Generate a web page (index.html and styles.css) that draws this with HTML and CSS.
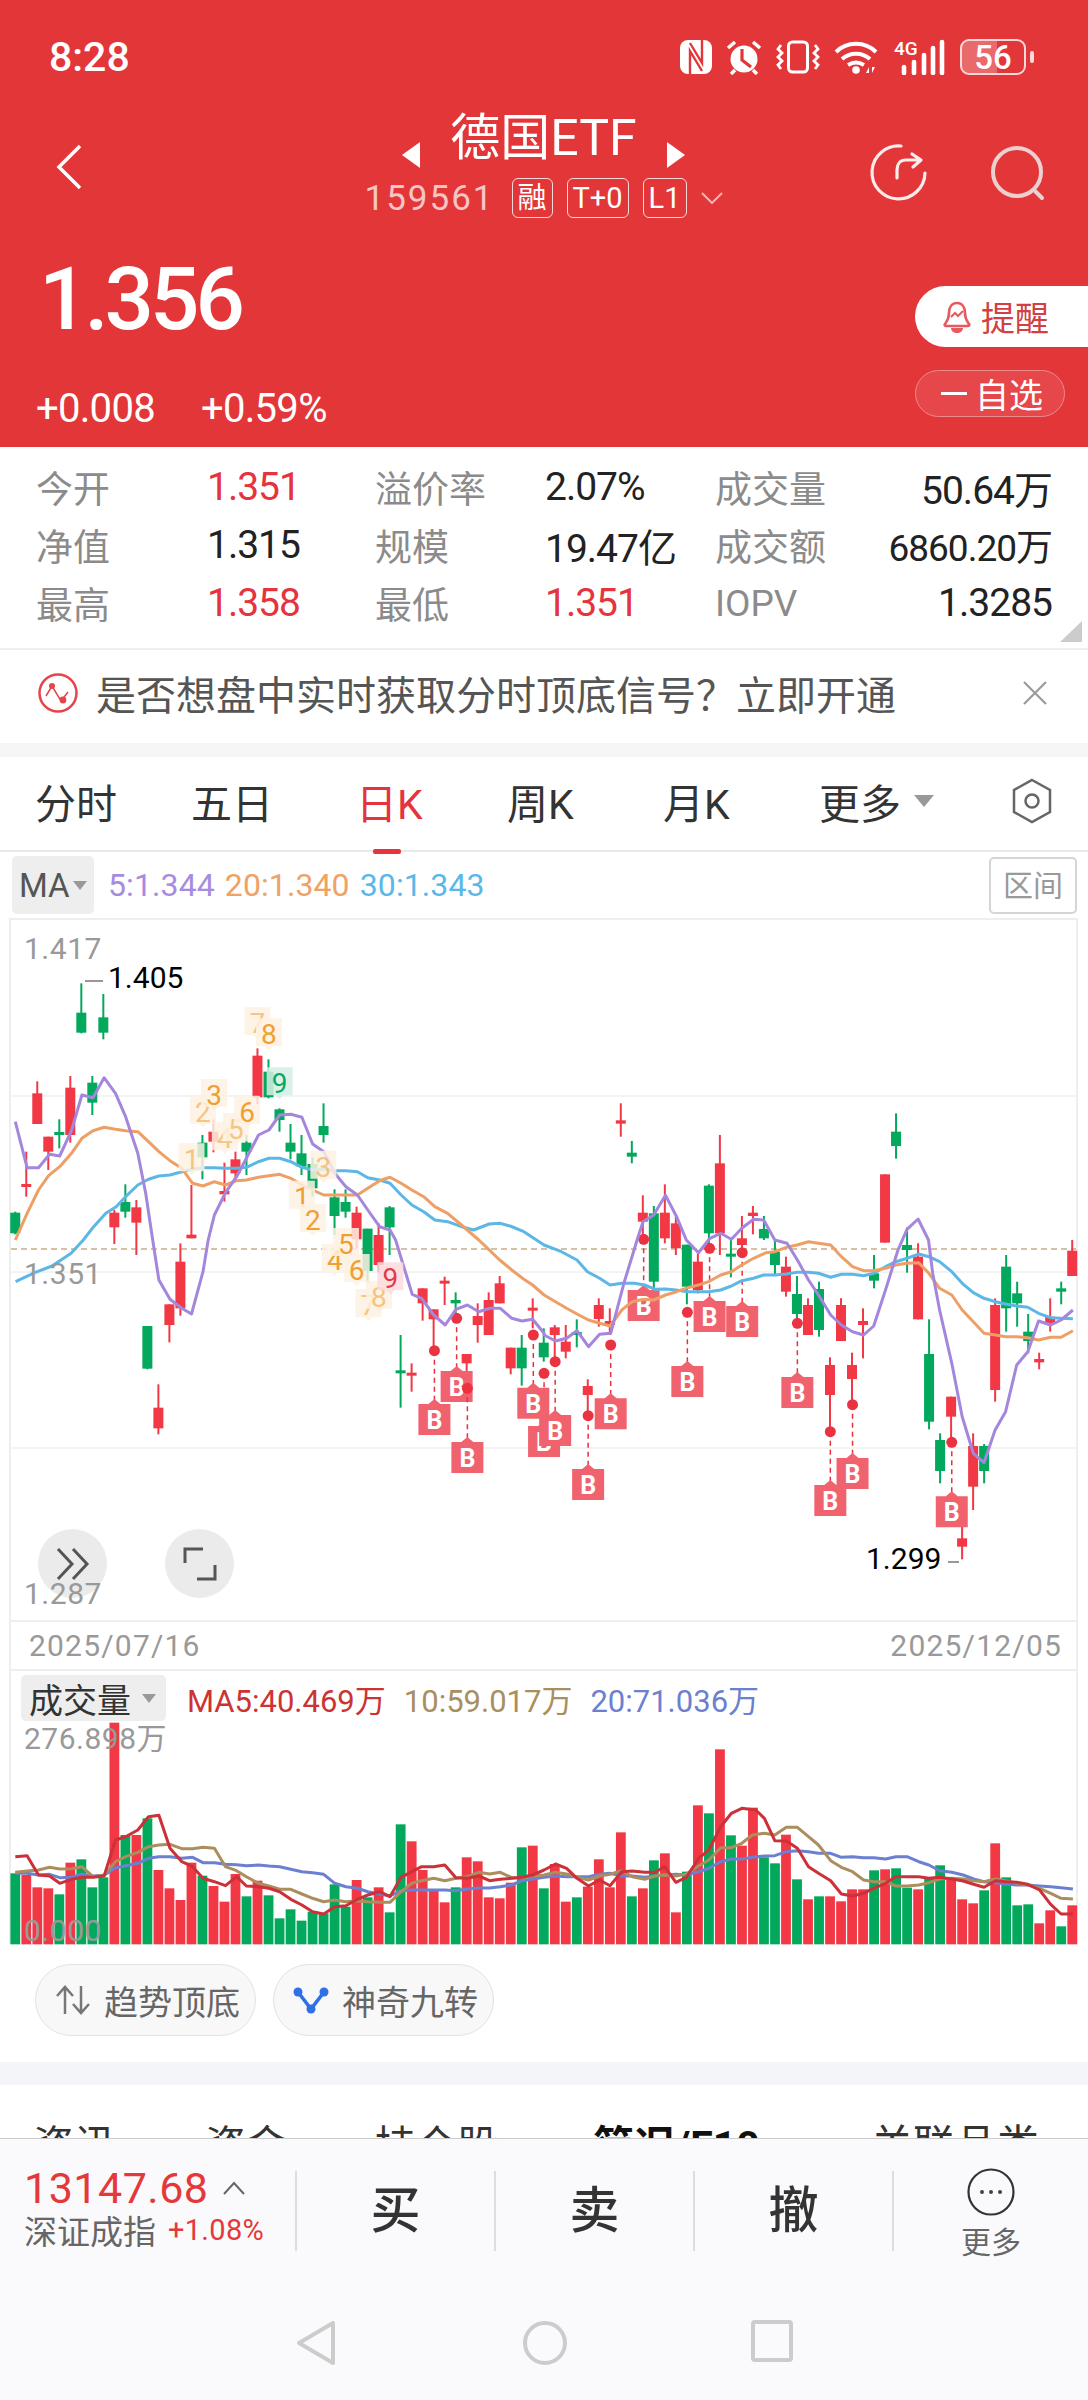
FILE: index.html
```html
<!DOCTYPE html>
<html lang="zh-CN">
  <head>
    <meta charset="UTF-8" />
    <meta name="viewport" content="width=device-width, initial-scale=1.0" />
    <title>德国ETF</title>
    <link rel="stylesheet" href="styles.css">
  </head>
  <body>
    <div id="root">
      <header class="header">
        <div class="status_bar">
          <span class="status_time">8:28</span>
          <div class="status_icons">
            <svg width="32" height="34" viewBox="0 0 32 34"><rect x="0" y="0" width="32" height="34" rx="8" fill="#fff"/><path d="M10 34V11l12 20M22 0v23L10 3" fill="none" stroke="#e33639" stroke-width="2.4"/></svg>
            <svg width="36" height="36" viewBox="0 0 36 36"><circle cx="18" cy="20" r="13.5" fill="#fff"/><path d="M16 10v11l9 7" fill="none" stroke="#e33639" stroke-width="3.2"/><path d="M2 9l7-6M34 9l-7-6M9 31l-4 4M27 31l4 4" stroke="#fff" stroke-width="3.5"/></svg>
            <svg width="44" height="34" viewBox="0 0 44 34"><rect x="12.5" y="2" width="19" height="30" rx="4" fill="none" stroke="#fff" stroke-width="3"/><path d="M5 5L2 9l4 4-4 4 4 4-4 4 3 4M39 5l3 4-4 4 4 4-4 4 4 4-3 4" fill="none" stroke="#fff" stroke-width="2.8"/></svg>
            <svg width="46" height="34" viewBox="0 0 46 34"><path d="M2 12c11-11 29-11 40 0M8 19c8-7 20-7 28 0M14 25c5-3 11-3 16 0" fill="none" stroke="#fff" stroke-width="4"/><circle cx="22" cy="30" r="3.8" fill="#fff"/><path d="M32 33l3-6v6zM38 27v6l3-6z" fill="#fff"/></svg>
            <svg class="status_signal" width="52" height="40" viewBox="0 -4 52 40"><text x="0" y="16" class="status_4g">4G</text><path d="M10 28v6M20 23v11M30 16v18M39 9v25M48 3v31" stroke="#fff" stroke-width="4.6" stroke-linecap="round"/></svg>
            <div class="battery"><span>56</span></div>
            <i class="battery_tip"></i>
          </div>
        </div>

        <div class="nav">
          <svg class="nav_back" width="26" height="46" viewBox="0 0 26 46"><path d="M24 2L3 23l21 21" fill="none" stroke="#fff" stroke-width="3.5"/></svg>
          <div class="nav_title">
            <div class="title_row">
              <i class="arrow_left"></i>
              <span class="title_text">德国ETF</span>
              <i class="arrow_right"></i>
            </div>
            <div class="sub_row">
              <span class="sub_code">159561</span>
              <span class="sub_tag">融</span>
              <span class="sub_tag">T+0</span>
              <span class="sub_tag">L1</span>
              <svg width="22" height="12" viewBox="0 0 22 12"><path d="M1 1l10 10L21 1" fill="none" stroke="#f3b6b6" stroke-width="2"/></svg>
            </div>
          </div>
          <div class="nav_icons">
            <svg width="60" height="60" viewBox="0 0 60 60"><path d="M32 4A26.5 26.5 0 1 0 56 31" fill="none" stroke="#fbecec" stroke-width="3.2" stroke-linecap="round"/><path d="M28 36V28c0-6 3-10 9-10h14M43 12l9 6-8 7" fill="none" stroke="#fbecec" stroke-width="3.2" stroke-linecap="round" stroke-linejoin="round"/></svg>
            <svg width="60" height="60" viewBox="0 0 60 60"><circle cx="30" cy="30" r="24" fill="none" stroke="#eccfcf" stroke-width="4"/><path d="M47 48l8 8" stroke="#eccfcf" stroke-width="4" stroke-linecap="round"/></svg>
          </div>
        </div>

        <div class="quote">
          <div class="quote_main">
            <div class="quote_price">1.356</div>
            <div class="quote_change"><span>+0.008</span><span>+0.59%</span></div>
          </div>
          <div class="quote_actions">
            <div class="btn_remind">
              <svg width="32" height="34" viewBox="0 0 32 34"><path d="M4 24c2-3 4-5 4-11C8 7 11 3 16 3s8 4 8 10c0 6 2 8 4 11 1 1 0 2-1 2H5c-1 0-2-1-1-2z" fill="none" stroke="#e65a5f" stroke-width="2.6" stroke-linejoin="round"/><path d="M10 28c0 3 3 5 6 5s6-2 6-5z" fill="#e65a5f"/><path d="M10 17l4-4 3 3 5-5" fill="none" stroke="#e65a5f" stroke-width="2"/></svg>
              <span>提醒</span>
            </div>
            <div class="btn_watch"><i></i><span>自选</span></div>
          </div>
        </div>
      </header>

      <section class="stats">
        <span class="stat_label">今开</span><span class="stat_val up">1.351</span>
        <span class="stat_label">溢价率</span><span class="stat_val">2.07%</span>
        <span class="stat_label col3">成交量</span><span class="stat_val right">50.64万</span>
        <span class="stat_label">净值</span><span class="stat_val">1.315</span>
        <span class="stat_label">规模</span><span class="stat_val">19.47亿</span>
        <span class="stat_label col3">成交额</span><span class="stat_val right small">6860.20万</span>
        <span class="stat_label">最高</span><span class="stat_val up">1.358</span>
        <span class="stat_label">最低</span><span class="stat_val up">1.351</span>
        <span class="stat_label col3">IOPV</span><span class="stat_val right">1.3285</span>
        <i class="stats_corner"></i>
      </section>

      <section class="notice">
        <svg width="42" height="42" viewBox="0 0 42 42"><circle cx="21" cy="21" r="18.5" fill="none" stroke="#e5444c" stroke-width="2.5"/><path d="M9 24l6-10 9 15 7-9" fill="none" stroke="#e5444c" stroke-width="1.5"/><circle cx="15" cy="14" r="3" fill="#e5444c"/><circle cx="26" cy="28" r="3.4" fill="#e5444c"/></svg>
        <span class="notice_text">是否想盘中实时获取分时顶底信号？立即开通</span>
        <svg class="notice_close" width="26" height="26" viewBox="0 0 26 26"><path d="M2 2l22 22M24 2L2 24" stroke="#9a9a9a" stroke-width="2.2"/></svg>
      </section>

      <nav class="tabs">
        <span class="tab tab_a">分时</span>
        <span class="tab tab_b">五日</span>
        <span class="tab tab_c active">日K</span>
        <span class="tab tab_d">周K</span>
        <span class="tab tab_e">月K</span>
        <span class="tab tab_f">更多<i class="tri"></i></span>
        <svg class="tab_icon" width="40" height="46" viewBox="0 0 40 46"><path d="M20 2l18 10v22L20 44 2 34V12z" fill="none" stroke="#666" stroke-width="2.5"/><circle cx="20" cy="23" r="6.5" fill="none" stroke="#666" stroke-width="2.5"/></svg>
      </nav>

      <div class="ma_row">
        <div class="ma_chip">MA<i class="tri small"></i></div>
        <span class="ma_val ma5">5:1.344</span>
        <span class="ma_val ma20">20:1.340</span>
        <span class="ma_val ma30">30:1.343</span>
        <span class="ma_range">区间</span>
      </div>

      <section class="chart">
        <svg id="kline" width="1088" height="704"></svg>
        <div class="round_btn round_a">
          <svg width="36" height="34" viewBox="0 0 36 34"><path d="M3 2l14 15L3 32M18 2l14 15-14 15" fill="none" stroke="#555" stroke-width="3"/></svg>
        </div>
        <div class="round_btn round_b">
          <svg width="34" height="34" viewBox="0 0 34 34"><path d="M2 16V2h18M32 18v14H14" fill="none" stroke="#555" stroke-width="3"/></svg>
        </div>
        <span class="axis axis_top">1.417</span>
        <span class="axis axis_mid">1.351</span>
        <span class="axis axis_low">1.287</span>
        <span class="extreme extreme_high">1.405</span>
        <span class="extreme extreme_low">1.299</span>
      </section>

      <div class="date_row"><span>2025/07/16</span><span>2025/12/05</span></div>

      <section class="volume">
        <svg id="volume" width="1088" height="280"></svg>
        <div class="vol_head">
          <div class="vol_chip">成交量<i class="tri small"></i></div>
          <span class="vol_ma vol5">MA5:40.469万</span>
          <span class="vol_ma vol10">10:59.017万</span>
          <span class="vol_ma vol20">20:71.036万</span>
        </div>
        <span class="axis vol_max">276.898万</span>
        <span class="axis vol_min">0.000</span>
      </section>

      <div class="signals">
        <div class="signal">
          <svg width="36" height="30" viewBox="0 0 36 30"><path d="M10 29V3M2 11l8-9 8 9" fill="none" stroke="#777" stroke-width="2.5"/><path d="M26 1v26M18 19l8 9 8-9" fill="none" stroke="#777" stroke-width="2.5"/></svg>
          <span>趋势顶底</span>
        </div>
        <div class="signal">
          <svg width="36" height="28" viewBox="0 0 36 28"><path d="M5 6l13 17L31 6" fill="none" stroke="#2f6fe8" stroke-width="3.5"/><circle cx="5" cy="6" r="4.5" fill="#2f6fe8"/><circle cx="31" cy="6" r="4.5" fill="#2f6fe8"/><circle cx="18" cy="23" r="4.5" fill="#2f6fe8"/></svg>
          <span>神奇九转</span>
        </div>
      </div>

      <div class="band"></div>

      <div class="sub_tabs">
        <span class="sub_a">资讯</span>
        <span class="sub_b">资金</span>
        <span class="sub_c">持仓股</span>
        <span class="sub_d">简况/F10</span>
        <span class="sub_e">关联品类</span>
      </div>

      <footer class="bottom">
        <div class="trade">
          <div class="index_box">
            <div class="index_top"><span class="index_num">13147.68</span><svg width="22" height="14" viewBox="0 0 22 14"><path d="M1 13L11 2l10 11" fill="none" stroke="#666" stroke-width="2"/></svg></div>
            <div class="index_sub"><span class="index_name">深证成指</span><span class="index_pct">+1.08%</span></div>
          </div>
          <div class="trade_btn">买</div>
          <div class="trade_btn">卖</div>
          <div class="trade_btn">撤</div>
          <div class="trade_more">
            <svg width="48" height="48" viewBox="0 0 48 48"><circle cx="24" cy="24" r="22.5" fill="none" stroke="#333" stroke-width="2.2"/><circle cx="15" cy="24" r="2" fill="#444"/><circle cx="24" cy="24" r="2" fill="#444"/><circle cx="33" cy="24" r="2" fill="#444"/></svg>
            <span>更多</span>
          </div>
        </div>
        <div class="sys_nav">
          <svg width="42" height="46" viewBox="0 0 42 46"><path d="M37 3v40L3 23z" fill="none" stroke="#ccc" stroke-width="4" stroke-linejoin="round"/></svg>
          <svg width="46" height="46" viewBox="0 0 46 46"><circle cx="23" cy="23" r="20" fill="none" stroke="#ccc" stroke-width="4"/></svg>
          <svg width="42" height="42" viewBox="0 0 42 42"><rect x="2" y="2" width="38" height="38" rx="2" fill="none" stroke="#ccc" stroke-width="4"/></svg>
        </div>
      </footer>
    </div>
    <script src="chart.js"></script>
  </body>
</html>
```

FILE: styles.css
```css
* {
  box-sizing: border-box;
}
html,
body {
  margin: 0;
  padding: 0;
}
body {
  background: #fff;
  font-family: Roboto, "Noto Sans CJK SC", sans-serif;
  color: #222;
}
i {
  display: block;
}
svg {
  display: block;
  flex: none;
}
#root {
  width: 1088px;
  height: 2400px;
  overflow: hidden;
  display: flex;
  flex-direction: column;
}

/* header */
.header {
  height: 447px;
  background: #e33639;
  color: #fff;
}
.status_bar {
  height: 114px;
  padding: 0 54px 0 49px;
  display: flex;
  justify-content: space-between;
  align-items: center;
}
.status_time {
  font-size: 41px;
  font-weight: 500;
}
.status_icons {
  display: flex;
  align-items: center;
  gap: 14px;
}
.status_signal {
  margin-top: -4px;
}
.status_4g {
  font: 500 19px Roboto, sans-serif;
  fill: #fff;
}
.battery {
  width: 66px;
  height: 36px;
  border: 2.5px solid #f8dada;
  border-radius: 9px;
  background: linear-gradient(90deg, #ea6a6c 56%, #e33639 56%);
  display: flex;
  align-items: center;
  justify-content: center;
  font-size: 33px;
  font-weight: 500;
}
.battery_tip {
  width: 4px;
  height: 12px;
  margin-left: -10px;
  background: #f8dada;
  border-radius: 2px;
}
.nav {
  height: 111px;
  padding: 0 41px 0 56px;
  display: flex;
  justify-content: space-between;
  align-items: center;
}
.nav_back {
  margin-top: -6px;
}
.nav_title {
  width: 400px;
  margin: -9px 0 0 136px;
  display: flex;
  flex-direction: column;
  align-items: center;
}
.title_row {
  height: 52px;
  display: flex;
  align-items: center;
  gap: 30px;
}
.title_text {
  font-size: 50px;
  line-height: 52px;
}
.arrow_left,
.arrow_right {
  width: 0;
  height: 0;
  margin-top: 34px;
  border-top: 13px solid transparent;
  border-bottom: 13px solid transparent;
}
.arrow_left {
  border-right: 18px solid #fff;
}
.arrow_right {
  border-left: 18px solid #fff;
}
.sub_row {
  margin-top: 14px;
  display: flex;
  align-items: center;
  gap: 14px;
}
.sub_code {
  font-size: 35px;
  letter-spacing: 2px;
  color: #f6c5c5;
  margin-right: 3px;
}
.sub_tag {
  height: 40px;
  padding: 0 5px;
  border: 1px solid #f8dada;
  border-radius: 6px;
  font-size: 29px;
  line-height: 38px;
}
.nav_icons {
  margin-top: 4px;
  display: flex;
  gap: 58px;
}
.quote {
  height: 222px;
  display: flex;
  justify-content: space-between;
}
.quote_main {
  padding: 24px 0 0 36px;
}
.quote_price {
  font-size: 87px;
  line-height: 100px;
  font-weight: 500;
  margin-left: 3px;
  letter-spacing: -4px;
}
.quote_change {
  margin-top: 37px;
  display: flex;
  gap: 46px;
  font-size: 40px;
  line-height: 46px;
  letter-spacing: -.7px;
}
.quote_actions {
  padding-top: 61px;
  width: 173px;
}
.btn_remind {
  height: 61px;
  background: #fff;
  border-radius: 31px 0 0 31px;
  padding-left: 26px;
  display: flex;
  align-items: center;
  gap: 8px;
  font-size: 34px;
  color: #d23f45;
}
.btn_watch {
  width: 150px;
  height: 47px;
  margin-top: 23px;
  border: 1px solid #ee8a8c;
  border-radius: 24px;
  background: #e5474b;
  padding-left: 25px;
  display: flex;
  align-items: center;
  gap: 8px;
  font-size: 34px;
}
.btn_watch i {
  width: 26px;
  height: 3px;
  background: #fff;
}

/* stats */
.stats {
  position: relative;
  height: 203px;
  padding: 11px 36px 0;
  border-bottom: 2px solid #eee;
  display: grid;
  grid-template-columns: 171px 168px 170px 170px 70px 1fr;
  grid-auto-rows: 58px;
  align-items: center;
  font-size: 37px;
}
.stat_label {
  color: #8b8b8b;
}
.stat_label.col3 {
  grid-column: 5;
  white-space: nowrap;
}
.stat_val {
  color: #222;
  font-size: 39px;
  letter-spacing: -1px;
}
.stat_val.up {
  color: #e5343e;
}
.stat_val.right {
  grid-column: 6;
  justify-self: end;
  white-space: nowrap;
}
.stat_val.small {
  font-size: 37px;
}
.stats_corner {
  position: absolute;
  right: 6px;
  bottom: 6px;
  width: 0;
  height: 0;
  border-left: 22px solid transparent;
  border-bottom: 21px solid #ccc;
}

/* notice */
.notice {
  height: 93px;
  padding: 0 40px 6px 37px;
  display: flex;
  align-items: center;
}
.notice_text {
  margin-left: 17px;
  font-size: 40px;
  color: #555;
  white-space: nowrap;
}
.notice_close {
  margin-left: auto;
}

/* tabs */
.tabs {
  height: 110px;
  border-top: 14px solid #f6f6f6;
  border-bottom: 2px solid #eaeaea;
  padding: 0 0 4px 35px;
  display: flex;
  align-items: center;
  font-size: 41px;
  color: #333;
  position: relative;
}
.tab_a { width: 156px; }
.tab_b { width: 165px; }
.tab_c { width: 151px; }
.tab_d { width: 156px; }
.tab_e { width: 156px; }
.tab_f {
  display: flex;
  align-items: center;
  gap: 13px;
}
.tab.active {
  color: #e5343e;
  position: relative;
}
.tab.active::after {
  content: "";
  position: absolute;
  left: 17px;
  bottom: -23px;
  width: 28px;
  height: 5px;
  border-radius: 2px;
  background: #e5343e;
}
.tab_icon {
  margin-left: 78px;
}
.tri {
  width: 0;
  height: 0;
  border-left: 10px solid transparent;
  border-right: 10px solid transparent;
  border-top: 12px solid #999;
}
.tri.small {
  border-left-width: 7px;
  border-right-width: 7px;
  border-top-width: 9px;
}

/* ma row */
.ma_row {
  height: 66px;
  padding: 4px 11px 4px 12px;
  display: flex;
  align-items: center;
  font-size: 32px;
}
.ma_chip {
  width: 82px;
  height: 58px;
  background: #eee;
  border-radius: 5px;
  padding-left: 7px;
  display: flex;
  align-items: center;
  gap: 3px;
  font-size: 33px;
  color: #555;
  margin-right: 14px;
}
.ma_val {
  margin-right: 10px;
  letter-spacing: .1px;
}
.ma5 { color: #a78be0; }
.ma20 { color: #efa264; }
.ma30 { color: #5ab8e8; }
.ma_range {
  margin-left: auto;
  width: 88px;
  height: 57px;
  border: 2px solid #d5d5d5;
  border-radius: 5px;
  text-align: center;
  font-size: 30px;
  line-height: 53px;
  color: #999;
}

/* chart */
.chart {
  position: relative;
  height: 704px;
}
.buy_mark {
  font: 700 25px Roboto, sans-serif;
  fill: #fff;
  text-anchor: middle;
}
.nine_mark {
  font: 400 28px Roboto, sans-serif;
  text-anchor: middle;
}
.axis {
  position: absolute;
  left: 24px;
  font-size: 30px;
  line-height: 36px;
  color: #999;
  letter-spacing: .5px;
}
.axis_top { top: 13px; }
.axis_mid { top: 338px; }
.axis_low { top: 658px; }
.extreme {
  position: absolute;
  font-size: 30px;
  line-height: 36px;
  color: #000;
}
.extreme_high {
  left: 108px;
  top: 42px;
}
.extreme_low {
  left: 866px;
  top: 623px;
}
.round_btn {
  position: absolute;
  top: 611px;
  width: 69px;
  height: 69px;
  border-radius: 50%;
  background: #ebebeb;
  display: flex;
  align-items: center;
  justify-content: center;
}
.round_a { left: 38px; }
.round_b { left: 165px; }
.date_row {
  height: 47px;
  margin: 0 10px 0 9px;
  padding: 6px 14px 0 18px;
  border-left: 2px solid #eee;
  border-right: 2px solid #eee;
  display: flex;
  justify-content: space-between;
  font-size: 30px;
  line-height: 36px;
  letter-spacing: 1.2px;
  color: #999;
}

/* volume */
.volume {
  position: relative;
  height: 280px;
}
.vol_head {
  position: absolute;
  left: 21px;
  top: 6px;
  display: flex;
  align-items: center;
  font-size: 31px;
}
.vol_chip {
  width: 145px;
  height: 46px;
  background: #eee;
  border-radius: 5px;
  padding-left: 8px;
  margin-right: 21px;
  display: flex;
  align-items: center;
  gap: 11px;
  font-size: 34px;
  color: #333;
}
.vol_ma {
  margin-right: 18px;
}
.vol5 { color: #cc3333; }
.vol10 { color: #a98f60; }
.vol20 { color: #6b80d0; }
.vol_max { top: 52px; }
.vol_min { top: 244px; }

/* signals */
.signals {
  height: 113px;
  padding: 15px 0 0 35px;
  display: flex;
  gap: 17px;
}
.signal {
  width: 221px;
  height: 72px;
  background: #f8f8f8;
  border: 1px solid #e2e2e2;
  border-radius: 36px;
  padding-left: 19px;
  display: flex;
  align-items: center;
  gap: 13px;
  font-size: 34px;
  color: #666;
}
.band {
  height: 23px;
  background: #f4f5f8;
}
.sub_tabs {
  height: 53px;
  padding-top: 33px;
  overflow: hidden;
  display: flex;
  font-size: 41px;
  line-height: 56px;
  color: #333;
  white-space: nowrap;
}
.sub_tabs span {
  display: block;
  height: 60px;
}
.sub_a { margin-left: 33px; width: 172px; }
.sub_b { width: 170px; }
.sub_c { width: 218px; }
.sub_d { width: 278px; font-weight: 700; color: #111; }
.sub_e { font-size: 42px; }

/* bottom */
.bottom {
  flex: 1;
  background: #fafafc;
  border-top: 1px solid #ccc;
}
.trade {
  height: 114px;
  padding-top: 32px;
  display: flex;
}
.index_box {
  width: 297px;
  height: 80px;
  padding-left: 24px;
  border-right: 2px solid #ddd;
}
.index_top {
  display: flex;
  align-items: center;
  gap: 14px;
  height: 40px;
  margin-top: -3px;
}
.index_num {
  font-size: 43px;
  letter-spacing: .5px;
  color: #e5383b;
}
.index_sub {
  display: flex;
  align-items: center;
  gap: 12px;
  margin-top: -2px;
}
.index_name {
  font-size: 33px;
  color: #666;
}
.index_pct {
  font-size: 29px;
  letter-spacing: .3px;
  color: #e5383b;
}
.trade_btn {
  width: 199px;
  height: 80px;
  padding-bottom: 10px;
  border-right: 2px solid #ddd;
  display: flex;
  align-items: center;
  justify-content: center;
  font-size: 50px;
  font-weight: 500;
  color: #333;
}
.trade_more {
  flex: 1;
  margin-top: -3px;
  display: flex;
  flex-direction: column;
  align-items: center;
  gap: 9px;
  font-size: 30px;
  line-height: 36px;
  color: #666;
}
.sys_nav {
  height: 147px;
  padding: 67px 0 0 296px;
  display: flex;
  align-items: flex-start;
}
.sys_nav svg:nth-child(2) {
  margin-left: 184px;
  margin-right: 183px;
}
```

FILE: chart.js
```js
// candles and lines are stored in "reading units": x / 2.882 and y / 3 give pixels
const NS = "http://www.w3.org/2000/svg";
const RED = "#f23845";
const GREEN = "#02a85c";
const PITCH = 11.01;

function cx(i) {
  return 15.25 + i * PITCH;
}
function px(v) {
  return v / 2.882;
}
function py(v) {
  return v / 3 + 2;
}

function add(svg, tag, attrs, text) {
  const el = document.createElementNS(NS, tag);
  for (const k in attrs) el.setAttribute(k, attrs[k]);
  if (text) el.textContent = text;
  svg.appendChild(el);
  return el;
}

function line(svg, pts, color, width, mapY) {
  const d = pts.map((p) => px(p[0]).toFixed(1) + "," + mapY(p[1]).toFixed(1)).join(" ");
  add(svg, "polyline", { points: d, fill: "none", stroke: color, "stroke-width": width, "stroke-linejoin": "round" });
}

// [r/g, wick top, body top, body bottom, wick bottom]
const candles = [
  ["g", 875, 878, 940, 943], ["r", 695, 792, 798, 830], ["r", 484, 520, 612, 612], ["r", 650, 650, 695, 750],
  ["g", 598, 636, 644, 685], ["r", 468, 503, 645, 668], ["g", 190, 278, 338, 340], ["g", 468, 488, 548, 585],
  ["g", 222, 292, 338, 358], ["r", 870, 878, 922, 972], ["g", 793, 846, 875, 893], ["r", 840, 862, 908, 1005],
  ["g", 1218, 1218, 1346, 1348], ["r", 1393, 1463, 1525, 1543], ["r", 1153, 1153, 1215, 1267], ["r", 970, 1025, 1165, 1187],
  ["r", 795, 944, 955, 955], ["g", 645, 668, 712, 778], ["r", 598, 635, 665, 697], ["r", 728, 813, 823, 845],
  ["r", 695, 718, 760, 778], ["g", 645, 668, 695, 765], ["r", 385, 407, 532, 553], ["g", 418, 455, 532, 535],
  ["g", 565, 568, 600, 635], ["g", 612, 668, 695, 718], ["g", 645, 700, 740, 765], ["g", 712, 732, 805, 830],
  ["g", 550, 618, 645, 668], ["g", 808, 832, 888, 945], ["g", 808, 846, 875, 893], ["r", 860, 878, 958, 985],
  ["g", 926, 926, 1053, 1088], ["r", 910, 945, 1035, 1057], ["g", 858, 862, 922, 1005], ["g", 1245, 1351, 1359, 1463],
  ["r", 1330, 1358, 1364, 1415], ["r", 1105, 1105, 1150, 1202], ["r", 1168, 1168, 1198, 1280], ["r", 1070, 1082, 1088, 1155],
  ["g", 1117, 1140, 1150, 1185], ["r", 1302, 1302, 1330, 1400], ["r", 1150, 1188, 1215, 1268], ["r", 1117, 1140, 1245, 1245],
  ["r", 1068, 1090, 1150, 1150], ["r", 1283, 1283, 1345, 1363], ["g", 1245, 1283, 1345, 1397], ["r", 1135, 1163, 1171, 1225],
  ["g", 1225, 1268, 1312, 1325], ["r", 1215, 1222, 1245, 1315], ["r", 1215, 1265, 1295, 1315], ["g", 1198, 1236, 1244, 1282],
  ["r", 1378, 1398, 1425, 1480], ["r", 1135, 1155, 1197, 1220], ["r", 1165, 1203, 1215, 1245], ["r", 550, 601, 611, 650],
  ["g", 663, 698, 710, 730], ["r", 826, 878, 905, 965], ["g", 858, 880, 1085, 1120], ["r", 793, 878, 955, 970],
  ["r", 890, 910, 985, 1005], ["g", 974, 974, 1100, 1153], ["r", 1000, 1025, 1110, 1120], ["g", 793, 797, 940, 975],
  ["r", 645, 730, 940, 1005], ["g", 960, 1001, 1009, 1072], ["r", 888, 955, 975, 1000], ["r", 858, 878, 888, 943],
  ["g", 888, 927, 955, 960], ["g", 960, 995, 1035, 1065], ["r", 1010, 1040, 1115, 1130], ["g", 1068, 1122, 1182, 1195],
  ["r", 1135, 1155, 1245, 1245], ["g", 1085, 1107, 1230, 1250], ["r", 1312, 1335, 1425, 1535], ["r", 1135, 1155, 1263, 1263],
  ["r", 1298, 1335, 1377, 1450], ["r", 1165, 1203, 1215, 1315], ["g", 1005, 1060, 1082, 1105], ["r", 763, 763, 968, 968],
  ["g", 580, 635, 678, 716], ["g", 922, 975, 990, 1058], ["r", 970, 1010, 1198, 1198], ["g", 1198, 1302, 1505, 1528],
  ["g", 1540, 1560, 1653, 1690], ["r", 1430, 1430, 1490, 1567], ["r", 1818, 1855, 1880, 1918], ["r", 1540, 1578, 1700, 1770],
  ["g", 1572, 1578, 1653, 1690], ["r", 1135, 1155, 1410, 1445], ["g", 1005, 1040, 1165, 1235], ["g", 1085, 1120, 1150, 1220],
  ["g", 1182, 1235, 1263, 1300], ["r", 1298, 1317, 1327, 1348], ["r", 1135, 1190, 1210, 1235], ["g", 1085, 1105, 1115, 1153],
  ["r", 960, 992, 1068, 1068],
];

const ma5 = [[44,605],[78,743],[111,743],[143,703],[172,708],[206,632],[236,525],[268,533],[300,473],[333,520],[362,590],[397,700],[420,820],[440,960],[458,1080],[490,1138],[524,1165],[552,1182],[585,1055],[600,960],[618,885],[650,818],[682,770],[710,715],[745,645],[775,630],[806,585],[838,583],[870,592],[901,672],[933,695],[965,760],[997,800],[1030,825],[1060,870],[1094,920],[1124,930],[1140,960],[1188,1123],[1215,1135],[1250,1185],[1283,1215],[1314,1168],[1347,1155],[1380,1175],[1411,1165],[1442,1165],[1475,1195],[1504,1203],[1535,1198],[1568,1240],[1568,1245],[1601,1263],[1633,1255],[1663,1232],[1696,1280],[1728,1243],[1760,1240],[1798,1090],[1836,960],[1853,905],[1884,885],[1918,826],[1950,890],[1978,960],[2013,998],[2046,955],[2077,940],[2108,958],[2138,925],[2172,898],[2201,900],[2233,960],[2268,970],[2298,1020],[2330,1080],[2359,1125],[2394,1185],[2425,1215],[2457,1235],[2489,1245],[2518,1218],[2552,1110],[2588,990],[2614,928],[2646,897],[2676,960],[2688,1060],[2708,1170],[2743,1330],[2773,1490],[2805,1600],[2836,1628],[2868,1530],[2898,1475],[2930,1335],[2962,1295],[2993,1203],[3028,1215],[3058,1200],[3092,1170]];
const ma20 = [[44,960],[78,880],[111,810],[140,767],[172,740],[206,700],[236,655],[268,632],[300,622],[333,628],[362,632],[397,635],[428,665],[458,695],[490,722],[524,745],[555,790],[585,798],[618,785],[650,795],[682,782],[710,780],[745,772],[775,767],[806,763],[838,775],[870,795],[901,810],[933,825],[965,825],[997,825],[1030,825],[1060,805],[1094,782],[1124,772],[1156,790],[1187,810],[1221,830],[1253,860],[1290,880],[1330,915],[1380,960],[1400,980],[1440,1020],[1475,1050],[1510,1078],[1535,1095],[1568,1125],[1601,1145],[1633,1165],[1663,1182],[1696,1200],[1728,1210],[1758,1218],[1792,1170],[1822,1145],[1855,1138],[1884,1140],[1918,1125],[1950,1115],[1982,1103],[2013,1095],[2042,1085],[2077,1065],[2108,1055],[2138,1035],[2172,1015],[2208,998],[2233,995],[2266,982],[2297,975],[2330,965],[2359,970],[2394,975],[2425,1010],[2457,1040],[2489,1052],[2518,1052],[2552,1045],[2582,1035],[2614,1030],[2648,1028],[2677,1060],[2708,1105],[2743,1125],[2773,1170],[2805,1205],[2836,1240],[2869,1245],[2898,1250],[2930,1250],[2962,1253],[2993,1260],[3028,1252],[3058,1252],[3092,1232]];
const ma30 = [[45,1085],[100,1058],[150,1038],[205,1000],[240,960],[270,920],[305,880],[335,860],[362,830],[397,795],[428,778],[458,768],[490,765],[524,755],[555,747],[585,743],[618,743],[650,745],[682,745],[710,742],[745,725],[775,715],[806,715],[838,725],[870,742],[901,750],[933,748],[965,752],[997,752],[1030,755],[1060,773],[1094,780],[1124,790],[1156,825],[1187,855],[1221,875],[1253,900],[1290,905],[1330,920],[1365,930],[1410,912],[1440,910],[1470,918],[1510,935],[1568,975],[1618,995],[1663,1020],[1693,1055],[1728,1075],[1758,1095],[1793,1090],[1828,1090],[1858,1095],[1888,1108],[1918,1107],[1948,1110],[1982,1115],[2013,1115],[2042,1115],[2077,1110],[2108,1098],[2138,1082],[2172,1075],[2201,1065],[2233,1065],[2266,1062],[2297,1057],[2330,1057],[2359,1060],[2394,1072],[2425,1063],[2457,1063],[2489,1067],[2518,1060],[2552,1040],[2582,1025],[2614,1015],[2648,1002],[2677,1010],[2708,1025],[2743,1055],[2773,1090],[2805,1118],[2836,1135],[2869,1145],[2898,1152],[2930,1158],[2962,1162],[2993,1180],[3028,1193],[3058,1195],[3092,1196]];

// [number, x, y, faded, colour]
const nineTurn = [
  [1, 552, 718, 1, "o"], [2, 585, 575, 1, "o"], [3, 617, 525, 0, "o"], [4, 648, 655, 1, "o"], [5, 680, 628, 1, "o"],
  [6, 712, 575, 0, "o"], [7, 742, 310, 1, "o"], [8, 775, 343, 0, "o"], [9, 806, 490, 0, "g"],
  [1, 870, 830, 0, "o"], [2, 902, 900, 0, "o"], [3, 932, 740, 1, "o"], [4, 965, 1020, 0, "o"], [5, 997, 972, 0, "o"],
  [6, 1028, 1050, 0, "o"], [7, 1062, 1155, 1, "o"], [8, 1092, 1130, 1, "o"], [9, 1125, 1075, 0, "r"],
];

// [x, dot y, box top]
const buys = [
  [1568, 1360, 1518], [1252, 1292, 1452], [1316, 1195, 1353], [1347, 1405, 1566], [1537, 1245, 1403],
  [1600, 1325, 1485], [1695, 1487, 1647], [1760, 1275, 1435], [1855, 958, 1110], [1981, 1177, 1338],
  [2045, 985, 1143], [2139, 998, 1158], [2298, 1210, 1371], [2393, 1535, 1695], [2457, 1454, 1614], [2743, 1567, 1729],
];

const kline = document.getElementById("kline");

// frame and grid
add(kline, "rect", { x: 10, y: 1, width: 1067, height: 702, fill: "none", stroke: "#eeeeee", "stroke-width": 2 });
[178, 354, 530].forEach((y) => add(kline, "path", { d: "M11 " + y + "H1076", stroke: "#f3f3f3", "stroke-width": 2 }));
add(kline, "path", { d: "M11 331H1076", stroke: "#c9ae84", "stroke-width": 1.5, "stroke-dasharray": "6 4" });

// high / low ticks
add(kline, "path", { d: "M85 63H103M948 644H959", stroke: "#777", "stroke-width": 1.5 });

// candles
candles.forEach((c, i) => {
  const color = c[0] === "r" ? RED : GREEN;
  const x = cx(i);
  add(kline, "path", { d: "M" + x + " " + py(c[1]) + "V" + py(c[4]), stroke: color, "stroke-width": 2 });
  add(kline, "rect", { x: x - 5, y: py(c[2]), width: 10, height: Math.max(py(c[3]) - py(c[2]), 3), fill: color });
});

// buy signals under the lines
buys.forEach((b) => {
  const x = px(b[0]);
  const top = py(b[2]);
  add(kline, "path", { d: "M" + x + " " + py(b[1]) + "V" + top, stroke: "#e8303f", "stroke-width": 1.5, "stroke-dasharray": "5 4" });
  add(kline, "path", { d: "M" + (x - 16) + " " + top + "H" + (x - 6) + "L" + x + " " + (top - 5) + "L" + (x + 6) + " " + top + "H" + (x + 16) + "V" + (top + 31) + "H" + (x - 16) + "Z", fill: "#f0636e" });
  add(kline, "text", { x: x, y: top + 25, class: "buy_mark" }, "B");
  add(kline, "circle", { cx: x, cy: py(b[1]), r: 5.5, fill: "#ea3241" });
});

line(kline, ma30, "#5db7e6", 3, py);
line(kline, ma20, "#ee9f66", 3, py);
line(kline, ma5, "#a487dd", 3, py);

// nine turn numbers
nineTurn.forEach((n) => {
  const x = px(n[1]);
  const y = py(n[2]);
  const bg = { o: "#fdf1e2", g: "#d5efe3", r: "#fbdadd" }[n[4]];
  const fg = { o: "#f0a030", g: "#0aa663", r: "#e63946" }[n[4]];
  add(kline, "path", { d: "M" + (x - 13) + " " + (y - 16) + "h26v28h-9l-4 4-4-4h-9z", fill: bg, opacity: 0.85 });
  add(kline, "text", { x: x, y: y + 10, fill: fg, opacity: n[3] ? 0.55 : 1, class: "nine_mark" }, String(n[0]));
});

// volume, tops in reading units, base at 913
const volTop = [
  ["g",700],["r",705],["r",742],["r",745],["g",763],["r",668],["g",658],["g",742],["g",712],["r",248],
  ["g",585],["r",585],["g",535],["r",690],["r",745],["r",780],["r",668],["g",707],["r",738],["r",785],
  ["r",702],["g",769],["r",722],["g",766],["g",835],["g",808],["g",842],["g",815],["g",820],["g",733],
  ["g",800],["r",720],["g",772],["r",742],["g",817],["g",553],["r",604],["r",690],["r",752],["r",787],
  ["g",742],["r",652],["r",664],["r",772],["r",775],["r",728],["g",622],["r",617],["g",745],["r",672],
  ["r",785],["g",772],["r",740],["r",658],["r",742],["r",577],["g",769],["r",745],["g",661],["r",640],
  ["r",817],["g",695],["r",496],["g",520],["r",328],["g",586],["r",617],["r",503],["g",652],["g",670],
  ["r",584],["g",718],["r",778],["g",769],["r",769],["r",784],["r",748],["r",748],["g",691],["r",688],
  ["g",685],["g",743],["r",748],["g",712],["g",676],["r",712],["r",778],["r",790],["g",751],["r",610],
  ["g",712],["g",796],["g",793],["r",850],["r",811],["g",859],["r",796],
];
const volMa5 = [[44,650],[78,647],[111,705],[143,708],[172,730],[206,718],[236,712],[268,712],[300,708],[333,600],[362,590],[397,570],[428,530],[458,526],[490,625],[524,665],[555,680],[585,715],[618,725],[650,737],[682,710],[710,738],[745,740],[775,745],[806,755],[838,778],[870,795],[901,815],[933,822],[965,800],[997,797],[1030,778],[1060,765],[1094,755],[1124,770],[1156,712],[1187,695],[1215,680],[1250,680],[1282,675],[1314,713],[1347,715],[1380,708],[1411,722],[1442,718],[1475,715],[1504,712],[1535,705],[1568,690],[1601,672],[1633,685],[1663,715],[1696,738],[1728,720],[1758,737],[1792,695],[1822,693],[1858,697],[1888,697],[1915,680],[1948,727],[1978,712],[1998,680],[2013,655],[2043,630],[2077,560],[2108,520],[2138,505],[2178,510],[2203,535],[2233,602],[2266,603],[2298,625],[2330,680],[2359,700],[2394,722],[2425,762],[2457,768],[2489,760],[2518,745],[2552,730],[2582,710],[2614,710],[2648,710],[2677,715],[2708,712],[2743,717],[2776,723],[2806,733],[2836,742],[2869,722],[2898,725],[2930,727],[2962,733],[2996,750],[3028,793],[3058,822],[3092,822]];
const volMa10 = [[44,697],[78,693],[111,690],[143,682],[172,687],[206,686],[236,680],[268,710],[300,705],[333,665],[362,650],[397,637],[428,620],[458,615],[490,613],[524,626],[555,626],[585,622],[618,625],[650,680],[682,692],[710,710],[745,730],[775,738],[806,748],[838,748],[870,762],[901,775],[933,785],[965,780],[997,785],[1030,782],[1060,785],[1094,787],[1124,787],[1156,755],[1187,730],[1215,722],[1250,715],[1282,722],[1314,715],[1347,710],[1380,697],[1411,702],[1442,697],[1475,713],[1504,713],[1535,708],[1568,705],[1601,697],[1633,702],[1663,712],[1696,720],[1728,708],[1758,703],[1792,692],[1822,710],[1858,718],[1888,708],[1915,705],[1948,708],[1978,702],[2013,678],[2043,660],[2077,623],[2108,623],[2138,610],[2168,585],[2203,580],[2233,585],[2266,562],[2298,562],[2330,590],[2359,615],[2394,662],[2425,682],[2457,695],[2489,720],[2518,725],[2552,725],[2582,738],[2614,738],[2648,735],[2677,728],[2708,717],[2743,715],[2776,717],[2806,722],[2836,725],[2869,717],[2898,722],[2930,730],[2962,735],[2996,745],[3028,760],[3058,775],[3092,777]];
const volMa20 = [[44,700],[78,700],[111,705],[143,703],[172,713],[206,712],[236,703],[268,708],[300,706],[333,683],[362,677],[397,670],[428,655],[458,650],[490,650],[524,655],[555,652],[585,668],[618,668],[650,673],[682,674],[710,677],[745,675],[775,678],[806,680],[838,688],[870,695],[901,698],[933,703],[965,730],[997,740],[1030,745],[1060,755],[1094,762],[1124,768],[1156,752],[1187,750],[1215,750],[1250,750],[1282,750],[1314,752],[1347,747],[1380,744],[1411,744],[1442,740],[1475,735],[1504,722],[1535,717],[1568,712],[1601,708],[1633,710],[1696,710],[1728,703],[1758,700],[1792,708],[1822,708],[1858,712],[1915,705],[1948,703],[1978,705],[2013,695],[2043,685],[2077,665],[2108,657],[2138,657],[2168,652],[2203,648],[2233,647],[2266,635],[2298,632],[2330,635],[2359,640],[2394,640],[2425,652],[2457,650],[2489,653],[2518,653],[2552,657],[2582,650],[2614,650],[2648,665],[2677,675],[2708,692],[2743,697],[2776,705],[2806,717],[2836,725],[2869,728],[2898,732],[2930,735],[2962,735],[2996,738],[3028,740],[3058,743],[3092,747]];

const volume = document.getElementById("volume");
const vy = (v) => v / 3 - 29;

add(volume, "path", { d: "M10 0V275M1077 0V275M10 1H1077", fill: "none", stroke: "#eeeeee", "stroke-width": 2 });
volTop.forEach((b, i) => {
  add(volume, "rect", { x: 10.4 + i * PITCH, y: vy(b[1]), width: 9.8, height: (913 - b[1]) / 3, fill: b[0] === "r" ? RED : GREEN });
});
line(volume, volMa20, "#6b80d0", 3, vy);
line(volume, volMa10, "#ab8d5e", 3, vy);
line(volume, volMa5, "#cc3038", 3, vy);
```
